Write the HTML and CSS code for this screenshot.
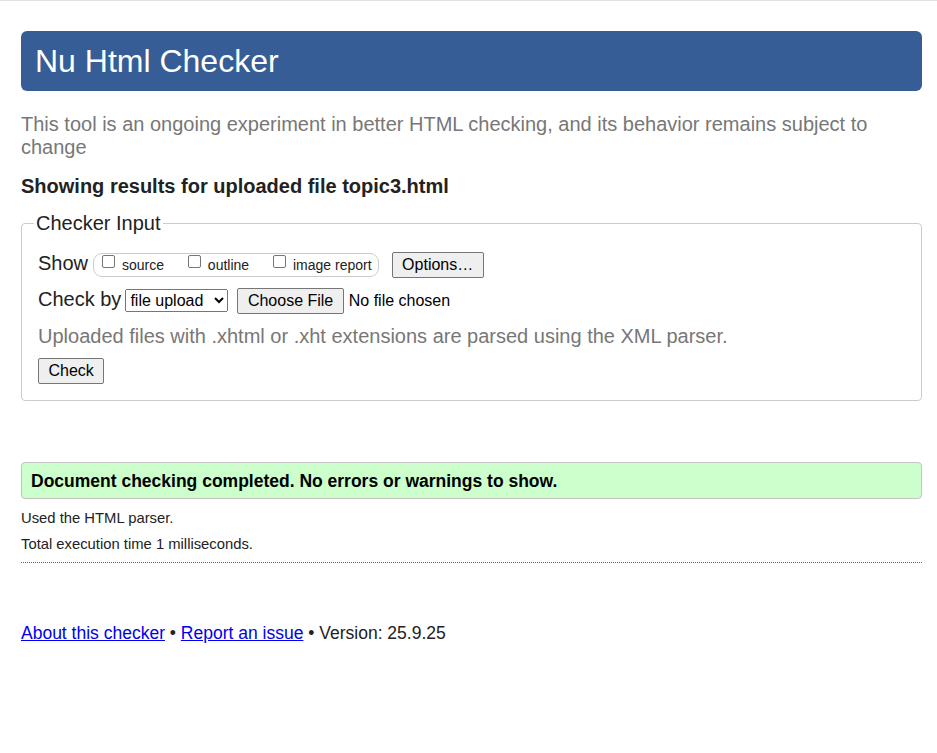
FILE: index.html
```html
<!DOCTYPE html>
<html lang="en">
<head>
<meta charset="utf-8">
<title>Showing results for uploaded file topic3.html - Nu Html Checker</title>
<link rel="stylesheet" href="styles.css">
</head>
<body>
<h1 class="masthead">Nu Html Checker</h1>
<p class="intro">This tool is an ongoing experiment in better HTML checking, and its behavior remains subject to change</p>
<p class="results-heading">Showing results for uploaded file topic3.html</p>
<form class="checker-form">
<fieldset class="checker">
<legend class="checker-legend">Checker Input</legend>
<div class="row">
<span class="row-label">Show</span>
<span class="show-group"><label class="show-opt"><input type="checkbox"> source</label><label class="show-opt"><input type="checkbox"> outline</label><label class="show-opt"><input type="checkbox"> image report</label></span>
<button type="button" class="btn btn-options">Options…</button>
</div>
<div class="row row-second">
<span class="row-label">Check by</span>
<select class="check-by"><option>file upload</option></select>
<button type="button" class="btn btn-file">Choose File</button>
<span class="file-name">No file chosen</span>
</div>
<p class="hint">Uploaded files with .xhtml or .xht extensions are parsed using the XML parser.</p>
<div class="submit-row"><button type="button" class="btn">Check</button></div>
</fieldset>
</form>
<div class="success">Document checking completed. No errors or warnings to show.</div>
<p class="details details-first">Used the HTML parser.</p>
<p class="details">Total execution time 1 milliseconds.</p>
<hr class="sep">
<p class="footer"><a href="#">About this checker</a> • <a href="#">Report an issue</a> • Version: 25.9.25</p>
</body>
</html>
```

FILE: styles.css
```css
html {
  background: #fff;
}

body {
  margin: 0;
  border-top: 1px solid #e2e2e2;
  padding: 30px 15px 40px 21px;
  font-family: "Liberation Sans", Arial, sans-serif;
  color: #222;
}

.masthead {
  margin: 0;
  height: 60px;
  line-height: 60px;
  padding-left: 14px;
  font-size: 32px;
  font-weight: normal;
  color: #fff;
  background: #365d95;
  border-radius: 6px;
}

.intro {
  margin: 22px 0 0;
  font-size: 20px;
  line-height: 23px;
  color: #777;
}

.results-heading {
  margin: 16px 0 0;
  font-size: 20px;
  line-height: 23px;
  font-weight: bold;
  color: #222;
}

.checker-form {
  margin: 14px 0 0;
}

.checker {
  margin: 0;
  padding: 17px 16px 16px;
  border: 1px solid #cccccc;
  border-radius: 4px;
  min-width: 0;
}

.checker-legend {
  padding: 0 2px;
  margin-left: -4px;
  font-size: 20px;
  line-height: 23px;
  color: #222;
}

.row {
  display: flex;
  align-items: baseline;
}

.row-second {
  margin-top: 10px;
}

.row-label {
  font-size: 20px;
  line-height: 23px;
}

.show-group {
  display: inline-block;
  margin-left: 5px;
  padding: 0 6px 0 4px;
  border: 1px solid #cccccc;
  border-radius: 9px;
  font-size: 14px;
  line-height: 22px;
  white-space: nowrap;
}

.show-opt + .show-opt {
  margin-left: 20px;
}

.show-opt input {
  -webkit-appearance: none;
  appearance: none;
  box-sizing: border-box;
  width: 13px;
  height: 13px;
  margin: 0 3px 2px 4px;
  vertical-align: baseline;
  background: #fff;
  border: 1px solid #767676;
  border-radius: 2px;
}

.btn {
  font-family: "Liberation Sans", Arial, sans-serif;
  font-size: 16px;
  line-height: 18px;
  padding: 3px 9.5px;
  color: #000;
  background: #efefef;
  border: 1px solid #767676;
  border-radius: 2px;
}

.btn-options {
  margin-left: 13px;
}

.check-by {
  margin-left: 4px;
  width: 103px;
  height: 23px;
  font-family: "Liberation Sans", Arial, sans-serif;
  font-size: 16px;
  color: #000;
}

.btn-file {
  margin-left: 9px;
}

.file-name {
  margin-left: 5px;
  font-size: 16px;
  line-height: 18px;
  color: #000;
}

.hint {
  margin: 11px 0 0;
  font-size: 20px;
  line-height: 23px;
  color: #777;
}

.submit-row {
  margin-top: 10px;
  display: flex;
}

.success {
  margin-top: 61px;
  padding: 7px 9px 6px;
  font-size: 17.5px;
  line-height: 22px;
  font-weight: bold;
  color: #000;
  background: #ccffcc;
  border: 1px solid #c4c4c4;
  border-radius: 4px;
}

.details {
  margin: 8px 0 0;
  font-size: 14.8px;
  line-height: 18px;
  color: #222;
}

.details-first {
  margin-top: 10px;
}

.sep {
  margin: 9px 0 0;
  border: 0;
  border-top: 1px dotted #666;
  height: 0;
}

.footer {
  margin: 60px 0 0;
  font-size: 17.5px;
  line-height: 21px;
  color: #222;
}

.footer a {
  color: #0000ee;
}
```
